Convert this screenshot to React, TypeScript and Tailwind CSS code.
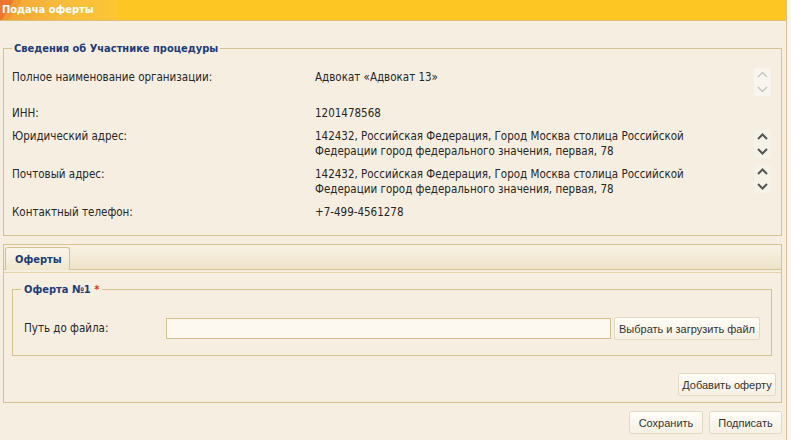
import React from "react";

const Chevrons = ({ disabled }: { disabled?: boolean }) => {
  const c = disabled ? "#c4c4c4" : "#555555";
  return (
    <div className={`w-[17px] h-[28px] flex flex-col items-center justify-between py-[3px] ${disabled ? "bg-[#f9f5ee]" : "bg-[#f7f2e8]"}`}>
      <svg width="11" height="7" viewBox="0 0 11 7">
        <path d="M1 6 L5.5 1.5 L10 6" fill="none" stroke={c} strokeWidth={disabled ? 1.4 : 2} />
      </svg>
      <svg width="11" height="7" viewBox="0 0 11 7">
        <path d="M1 1 L5.5 5.5 L10 1" fill="none" stroke={c} strokeWidth={disabled ? 1.4 : 2} />
      </svg>
    </div>
  );
};

const Btn = ({ children, className = "" }: { children: React.ReactNode; className?: string }) => (
  <button
    className={`flex items-center justify-center h-[23px] rounded-[2px] border border-[#e3dac6] bg-gradient-to-b from-[#fffdf8] to-[#f6f0e3] text-[#333] [font-family:'Liberation_Sans',Arial,sans-serif] ${className}`}
  >
    <span className="whitespace-nowrap text-[11px] leading-[14px]">{children}</span>
  </button>
);

export default function App() {
  return (
    <div className="w-[791px] h-[440px] bg-[#faf6ee] [font-family:Tahoma,'DejaVu_Sans_Condensed','Liberation_Sans',sans-serif] text-[11.5px] leading-[15px] text-[#262626] overflow-hidden">
      <div className="w-[787px] h-[440px] bg-[#f6efe1] border-r border-[#d6c290] flex flex-col">
        {/* header */}
        <div className="relative h-[21px] shrink-0 bg-[#fdc623] border-b border-[#dcc07a] flex overflow-hidden">
          <div className="w-[118px] h-full bg-gradient-to-r from-[#f2a235] via-[#f7bb3c] to-[#fcc633]" />
          <svg className="absolute left-0 top-0" width="40" height="20" viewBox="0 0 40 20">
            <path d="M0 0 L14 0 L2 20 L0 20 Z" fill="#e8672a" opacity="0.75" />
            <path d="M14 0 L22 0 L8 20 L2 20 Z" fill="#ef8c2e" opacity="0.5" />
          </svg>
          <span className="absolute left-[2px] top-[2px] text-white font-bold text-[11px] leading-[15px]">Подача оферты</span>
        </div>

        <div className="flex flex-col px-[3px] pr-[4px]">
          {/* participant fieldset */}
          <fieldset className="mt-[20px] border border-[#d6c290] pl-[8px] pr-[10px] pb-[15px]">
            <legend className="px-[2px] font-bold text-[11px] text-[#1e3c78] leading-[15px]">Сведения об Участнике процедуры</legend>
            <div className="flex mt-[12px] h-[28px]">
              <div className="w-[303px] pt-[2px]">Полное наименование организации:</div>
              <div className="flex-1 pt-[2px]">Адвокат «Адвокат 13»</div>
              <Chevrons disabled />
            </div>
            <div className="flex mt-[10px] h-[15px]">
              <div className="w-[303px]">ИНН:</div>
              <div className="flex-1">1201478568</div>
            </div>
            <div className="flex mt-[8px] h-[30px]">
              <div className="w-[303px]">Юридический адрес:</div>
              <div className="flex-1">
                142432, Российская Федерация, Город Москва столица Российской
                <br />
                Федерации город федерального значения, первая, 78
              </div>
              <div className="mt-[1px]">
                <Chevrons />
              </div>
            </div>
            <div className="flex mt-[6px] h-[32px]">
              <div className="w-[303px] pt-[2px]">Почтовый адрес:</div>
              <div className="flex-1 pt-[2px]">
                142432, Российская Федерация, Город Москва столица Российской
                <br />
                Федерации город федерального значения, первая, 78
              </div>
              <Chevrons />
            </div>
            <div className="flex mt-[8px] h-[15px]">
              <div className="w-[303px]">Контактный телефон:</div>
              <div className="flex-1">+7-499-4561278</div>
            </div>
          </fieldset>

          {/* tab panel */}
          <div className="mt-[8px] border border-[#d6c290] flex flex-col">
            <div className="h-[25px] bg-gradient-to-b from-[#f8f1e3] to-[#efe4ca] border-b border-[#d6c290] flex items-end pl-[1px]">
              <div className="h-[23px] w-[65px] -mb-[1px] rounded-t-[3px] border border-b-0 border-[#d6c290] bg-gradient-to-b from-[#fbf6ec] to-[#f1e7d0] font-bold text-[11px] text-[#1e3c78] flex items-center pl-[9px]">
                Оферты
              </div>
            </div>
            <div className="mt-[2px] border-t border-[#e2d3ac] flex flex-col pl-[8px] pr-[5px] pb-[6px]">
              <fieldset className="mt-[9px] mr-[5px] border border-[#d6c290] pl-[11px] pr-[11px] pb-[15px]">
                <legend className="-ml-[3px] px-[3px] font-bold text-[11px] text-[#1e3c78] leading-[15px]">
                  Оферта №1 <span className="text-[#e03030]">*</span>
                </legend>
                <div className="flex items-center mt-[20px] h-[23px]">
                  <div className="w-[142px]">Путь до файла:</div>
                  <div className="w-[445px] h-[21px] bg-[#fdf9f1] border border-[#d4c08e]" />
                  <Btn className="ml-[3px] w-[146px]">Выбрать и загрузить файл</Btn>
                </div>
              </fieldset>
              <div className="flex justify-end mt-[17px]">
                <Btn className="w-[98px]">Добавить оферту</Btn>
              </div>
            </div>
          </div>

          <div className="flex justify-end gap-[6px] mt-[8px]">
            <Btn className="w-[74px] h-[22px]">Сохранить</Btn>
            <Btn className="w-[73px] h-[22px]">Подписать</Btn>
          </div>
        </div>
      </div>
    </div>
  );
}
